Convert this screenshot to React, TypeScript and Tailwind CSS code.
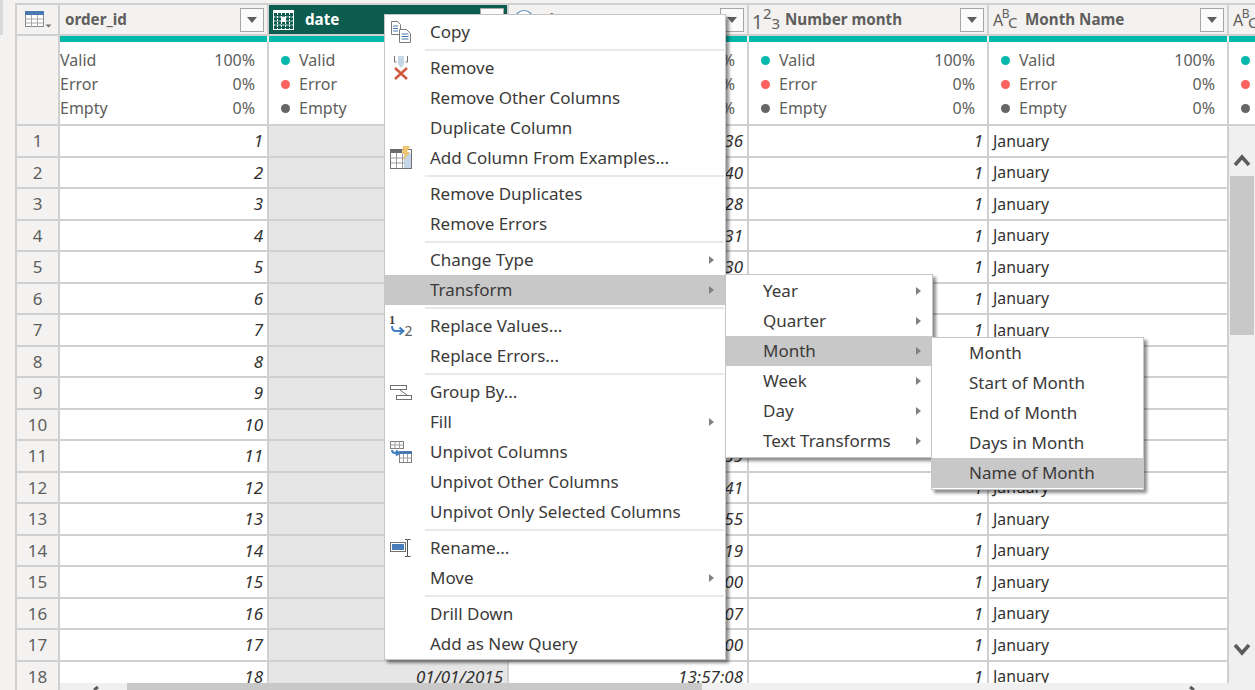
import React from "react";

const ROWS = Array.from({ length: 18 }, (_, i) => i + 1);
const TIMES = ["13:24:36","13:25:40","13:26:28","13:27:31","13:28:30","13:29:11","13:30:12","13:31:20","13:32:09","13:33:18","13:34:39","13:35:41","13:36:55","13:37:19","13:38:00","13:39:07","13:40:00","13:57:08"];

function Caret() {
  return <svg width="10" height="6" viewBox="0 0 10 6"><path d="M0 0h10L5 6z" fill="#605e5c" /></svg>;
}

function FilterBtn() {
  return (
    <div className="w-[24px] h-[24px] border border-[#a6a6a6] bg-[#fbfbfb] flex items-center justify-center shrink-0">
      <Caret />
    </div>
  );
}

function Arrow() {
  return <svg width="5" height="8" viewBox="0 0 5 8"><path d="M0 0l5 4-5 4z" fill="#808080" /></svg>;
}

function TableIcon() {
  return (
    <svg width="28" height="18" viewBox="0 0 28 18" className="shrink-0">
      <rect x="0.5" y="0.5" width="18" height="15" fill="#fff" stroke="#8a8a8a" />
      <rect x="0" y="0" width="19" height="4" fill="#4a78b0" />
      <path d="M0.5 8h18M0.5 12h18M6.5 4v12M12.5 4v12" stroke="#a8a8a8" />
      <path d="M20.5 13.5h6l-3 3z" fill="#707070" />
    </svg>
  );
}

function CalendarIcon() {
  return (
    <svg width="22" height="20" viewBox="0 0 22 20" className="shrink-0">
      <rect x="0.5" y="0.5" width="20" height="19" fill="none" stroke="#fff" />
      <rect x="0" y="0" width="21" height="3" fill="#fff" />
      <path d="M0.5 7h20M0.5 11h20M0.5 15h20M4.5 3v16M8.5 3v16M12.5 3v16M16.5 3v16" stroke="#fff" strokeDasharray="2 1" />
      <rect x="8" y="7" width="5" height="5" fill="#fff" />
    </svg>
  );
}

function ClockIcon() {
  return (
    <svg width="22" height="22" viewBox="0 0 22 22" className="shrink-0">
      <circle cx="11" cy="11" r="9.5" fill="#fff" stroke="#6d94c0" strokeWidth="1.2" />
      <path d="M11 5v6h5" fill="none" stroke="#605e5c" strokeWidth="1.2" />
    </svg>
  );
}

function NumType() {
  return (
    <span className="w-[24px] -ml-[1px] mr-[1px] shrink-0 text-[#605e5c] text-[19px] leading-none flex items-start">
      <span className="mt-[5px]">1</span>
      <span className="text-[15px] -mt-[2px]">2</span>
      <span className="text-[15px] mt-[8px]">3</span>
    </span>
  );
}

function AbcType() {
  return (
    <span className="w-[24px] shrink-0 text-[#605e5c] text-[16px] leading-none flex items-start tracking-[-1.5px]">
      <span className="mt-[3px]">A</span>
      <span className="text-[12px] -mt-[1px]">B</span>
      <span className="text-[15px] mt-[6px]">C</span>
    </span>
  );
}

function Header({ w, icon, name, selected, plain }: { w: string; icon: React.ReactNode; name: string; selected?: boolean; plain?: boolean }) {
  return (
    <div className={`${w} h-[29px] shrink-0 flex items-center pr-[3px] ${selected ? "bg-[#0c5c50]" : "bg-[#f3f2f1]"} ${plain ? "" : "pl-[4px]"}`}>
      {icon}
      <span className={`flex-1 text-[15.2px] font-bold whitespace-nowrap ${plain ? "pl-[5px]" : selected ? "pl-[10px]" : "pl-[8px]"} ${selected ? "text-white" : "text-[#605e5c]"}`}>{name}</span>
      <FilterBtn />
    </div>
  );
}

function Stats({ w, dots = true }: { w: string; dots?: boolean }) {
  const items = [
    ["Valid", "100%", "bg-[#01b8aa]"],
    ["Error", "0%", "bg-[#fd625e]"],
    ["Empty", "0%", "bg-[#666666]"],
  ];
  return (
    <div className={`${w} h-[82px] shrink-0 bg-white border-r-2 border-[#d0d0d0] pt-[6px] text-[16px] text-[#605e5c]`}>
      {items.map(([label, pct, color]) => (
        <div key={label} className="h-[24px] flex items-center pr-[12px] whitespace-nowrap">
          {dots && <span className={`w-[9px] h-[9px] rounded-full ml-[12px] mr-[9px] shrink-0 ${color}`} />}
          <span className="flex-1">{label}</span>
          <span>{pct}</span>
        </div>
      ))}
    </div>
  );
}

function BodyRow({ n }: { n: number }) {
  const cell = "h-full shrink-0 border-r-2 border-[#d0d0d0] flex items-center text-[17px] text-[#323130] whitespace-nowrap";
  return (
    <div className="h-[31.5px] flex border-b-2 border-[#d0d0d0] box-border bg-white">
      <div className={`${cell} w-[209px] justify-end pr-[4px] italic`}>{n}</div>
      <div className={`${cell} w-[240px] justify-end pr-[4px] italic bg-[#e6e6e6]`}>01/01/2015</div>
      <div className={`${cell} w-[240px] justify-end pr-[4px] italic`}>{TIMES[n - 1]}</div>
      <div className={`${cell} w-[240px] justify-end pr-[4px] italic`}>1</div>
      <div className="h-full w-[238px] shrink-0 flex items-center pl-[4px] pt-[2px] text-[15.8px] text-[#323130]">January</div>
    </div>
  );
}

function CopyIcon() {
  return (
    <svg width="20" height="22" viewBox="0 0 20 22">
      <path d="M0.5 0.5h6l3 3v10h-9z" fill="#fff" stroke="#7a7a7a" />
      <path d="M2 5h5M2 7.5h5M2 10h5" stroke="#4a78b0" />
      <path d="M8.5 8.5h7l4 4v9h-11z" fill="#fff" stroke="#7a7a7a" />
      <path d="M10.5 13h7M10.5 15.5h7M10.5 18h7" stroke="#4a78b0" />
    </svg>
  );
}

function RemoveIcon() {
  return (
    <svg width="18" height="24" viewBox="0 0 18 24">
      <path d="M2.5 0v6h2M15.5 0v6h-2" fill="none" stroke="#707070" />
      <path d="M6 0h6v8l-3 4-3-4z" fill="#c4d6e8" />
      <path d="M3 12l12 11M15 12L3 23" stroke="#d0563c" strokeWidth="2.4" />
    </svg>
  );
}

function ExamplesIcon() {
  return (
    <svg width="22" height="24" viewBox="0 0 22 24">
      <rect x="0.5" y="3.5" width="21" height="19" fill="#fff" stroke="#707070" />
      <rect x="0" y="3" width="12" height="4" fill="#6a6a6a" />
      <rect x="14" y="7" width="7" height="15" fill="#c4d6e8" />
      <path d="M0.5 12h14M0.5 17h14M6.5 7v15M12.5 7v15" stroke="#9a9a9a" />
      <path d="M13 0h7l-3 6h3l-7 9 2-7h-3z" fill="#eec56e" />
    </svg>
  );
}

function ReplaceIcon() {
  return (
    <svg width="24" height="22" viewBox="0 0 24 22">
      <text x="0" y="9" fontSize="12.5" fontWeight="700" fontFamily="Liberation Serif, serif" fill="#404040">1</text>
      <text x="15.5" y="21" fontSize="14" fontFamily="Noto Sans, sans-serif" fill="#606060">2</text>
      <path d="M3 11q0 5 4 5h7" fill="none" stroke="#3f7fc0" strokeWidth="2" />
      <path d="M10.500 12.500l4 3.500-4 3.500" fill="none" stroke="#3f7fc0" strokeWidth="2" />
    </svg>
  );
}

function GroupIcon() {
  return (
    <svg width="22" height="15" viewBox="0 0 22 15">
      <rect x="0.5" y="0.5" width="16" height="4" fill="#fff" stroke="#707070" />
      <rect x="6.5" y="10.5" width="15" height="4" fill="#fff" stroke="#707070" />
      <path d="M10 5l7 5" stroke="#707070" />
    </svg>
  );
}

function UnpivotIcon() {
  return (
    <svg width="22" height="22" viewBox="0 0 22 22">
      <rect x="0.5" y="0.5" width="13" height="7" fill="#fff" stroke="#808080" />
      <path d="M0.5 4h13M5 0.5v7M9.5 0.5v7" stroke="#a0a0a0" />
      <rect x="9.5" y="10.5" width="12" height="11" fill="#fff" stroke="#808080" />
      <rect x="9" y="10" width="13" height="3" fill="#4a78b0" />
      <path d="M9.5 17h12M13.5 13v8M17.5 13v8" stroke="#a0a0a0" />
      <path d="M2 9q0 3 3 3h4M6 9.5l3 2.5-3 2.5" fill="none" stroke="#3f7fc0" strokeWidth="2" />
    </svg>
  );
}

function RenameIcon() {
  return (
    <svg width="22" height="18" viewBox="0 0 22 18">
      <rect x="0.5" y="3.5" width="15" height="9" fill="#fff" stroke="#707070" />
      <rect x="2" y="5" width="12" height="6" fill="#4a7ebb" />
      <path d="M15 0.5h2.5M20.5 0.5H18M15 17.5h2.5M20.5 17.5H18M17.5 0.5v17" fill="none" stroke="#505050" />
    </svg>
  );
}

type Item = { label: string; icon?: React.ReactNode; sub?: boolean; active?: boolean } | "sep";

const MENU: Item[] = [
  { label: "Copy", icon: <CopyIcon /> },
  "sep",
  { label: "Remove", icon: <RemoveIcon /> },
  { label: "Remove Other Columns" },
  { label: "Duplicate Column" },
  { label: "Add Column From Examples...", icon: <ExamplesIcon /> },
  "sep",
  { label: "Remove Duplicates" },
  { label: "Remove Errors" },
  "sep",
  { label: "Change Type", sub: true },
  { label: "Transform", sub: true, active: true },
  "sep",
  { label: "Replace Values...", icon: <ReplaceIcon /> },
  { label: "Replace Errors..." },
  "sep",
  { label: "Group By...", icon: <GroupIcon /> },
  { label: "Fill", sub: true },
  { label: "Unpivot Columns", icon: <UnpivotIcon /> },
  { label: "Unpivot Other Columns" },
  { label: "Unpivot Only Selected Columns" },
  "sep",
  { label: "Rename...", icon: <RenameIcon /> },
  { label: "Move", sub: true },
  "sep",
  { label: "Drill Down" },
  { label: "Add as New Query" },
];

function MenuRows({ items, slot }: { items: Item[]; slot: string }) {
  return (
    <>
      {items.map((it, i) =>
        it === "sep" ? (
          <div key={i} className="h-[6px] pt-[2px] pl-[40px] pr-[1px]">
            <div className="h-[2px] bg-[#e8e8e8]" />
          </div>
        ) : (
          <div key={i} className={`h-[30px] flex items-center text-[17px] text-[#3b3a39] whitespace-nowrap ${it.active ? "bg-[#c8c8c8]" : ""}`}>
            <div className={`${slot} shrink-0 flex items-center justify-center pr-[13px]`}>{it.icon}</div>
            <span className="flex-1">{it.label}</span>
            {it.sub && <span className="pr-[11px] flex items-center"><Arrow /></span>}
          </div>
        )
      )}
    </>
  );
}

export default function App() {
  return (
    <div className="relative w-[1255px] h-[690px] overflow-hidden bg-[#f3f2f1] font-['Noto_Sans',sans-serif] flex">
      <div className="w-[15px] shrink-0">
        <div className="w-[3px] h-[35px] bg-[#d9d9d9]" />
      </div>
      <div className="flex-1 min-w-0 pt-[3px]">
        <div className="h-[687px] border-l-2 border-t-2 border-[#d0d0d0] flex flex-col overflow-hidden">
          {/* header */}
          <div className="flex h-[31px] border-b-2 border-[#d0d0d0] shrink-0">
            <div className="w-[43px] shrink-0 border-r-2 border-[#d0d0d0] flex items-center pl-[8px]"><TableIcon /></div>
            <div className="w-[209px] shrink-0 border-r-2 border-[#d0d0d0]"><Header w="w-full" plain icon={null} name="order_id" /></div>
            <div className="w-[240px] shrink-0 border-r-2 border-[#d0d0d0]"><Header w="w-full" selected icon={<CalendarIcon />} name="date" /></div>
            <div className="w-[240px] shrink-0 border-r-2 border-[#d0d0d0]"><Header w="w-full" icon={<ClockIcon />} name="time" /></div>
            <div className="w-[240px] shrink-0 border-r-2 border-[#d0d0d0]"><Header w="w-full" icon={<NumType />} name="Number month" /></div>
            <div className="w-[240px] shrink-0 border-r-2 border-[#d0d0d0]"><Header w="w-full" icon={<AbcType />} name="Month Name" /></div>
            <div className="flex-1 min-w-0 overflow-hidden pl-[4px] flex items-center"><AbcType /></div>
          </div>
          {/* quality bars */}
          <div className="flex h-[6px] shrink-0">
            <div className="w-[43px] shrink-0 border-r-2 border-[#d0d0d0]" />
            <div className="w-[207px] shrink-0 bg-[#01b8aa] mr-[2px]" />
            <div className="w-[238px] shrink-0 bg-[#01b8aa] mr-[2px]" />
            <div className="w-[238px] shrink-0 bg-[#01b8aa] mr-[2px]" />
            <div className="w-[238px] shrink-0 bg-[#01b8aa] mr-[2px]" />
            <div className="w-[238px] shrink-0 bg-[#01b8aa] mr-[2px]" />
            <div className="flex-1 bg-[#01b8aa]" />
          </div>
          {/* stats */}
          <div className="flex h-[84px] border-b-2 border-[#d0d0d0] shrink-0 overflow-hidden">
            <div className="w-[43px] shrink-0 border-r-2 border-[#d0d0d0]" />
            <Stats w="w-[209px]" dots={false} />
            <Stats w="w-[240px]" />
            <Stats w="w-[240px]" />
            <Stats w="w-[240px]" />
            <Stats w="w-[240px]" />
            <div className="flex-1 min-w-0 overflow-hidden bg-white"><Stats w="w-[240px]" /></div>
          </div>
          {/* body */}
          <div className="flex flex-1 min-h-0">
            <div className="w-[43px] shrink-0 border-r-2 border-[#d0d0d0] overflow-hidden">
              {ROWS.map((n) => (
                <div key={n} className="h-[31.5px] border-b-2 border-[#d0d0d0] box-border flex items-center justify-center text-[17px] text-[#605e5c]">{n}</div>
              ))}
            </div>
            <div className="flex-1 min-w-0 flex flex-col">
              <div className="flex-1 min-h-0 flex">
                <div className="w-[1169px] shrink-0 overflow-hidden border-r-2 border-[#d0d0d0]">
                  {ROWS.map((n) => <BodyRow key={n} n={n} />)}
                </div>
                <div className="flex-1 bg-[#f0f0f0] flex flex-col items-center pl-[1px] pr-[1px]">
                  <svg width="18" height="14" viewBox="0 0 18 14" className="mt-[27px] mb-[9px] shrink-0"><path d="M2 12L9 4l7 8" fill="none" stroke="#5c5c5c" strokeWidth="3.5" /></svg>
                  <div className="w-full h-[159px] bg-[#c8c8c8] shrink-0" />
                  <svg width="18" height="14" viewBox="0 0 18 14" className="mt-[308px] shrink-0"><path d="M2 2l7 8 7-8" fill="none" stroke="#5c5c5c" strokeWidth="3.5" /></svg>
                </div>
              </div>
              <div className="h-[7px] shrink-0 bg-[#f0f0f0] flex items-start">
                <svg width="8" height="7" viewBox="0 0 8 7" className="ml-[31px] shrink-0"><path d="M7 4L3 7" stroke="#5c5c5c" strokeWidth="3" /></svg>
                <div className="ml-[28px] w-[575px] h-[7px] bg-[#c8c8c8] shrink-0" />
                <svg width="8" height="7" viewBox="0 0 8 7" className="ml-[487px] shrink-0"><path d="M1 4l4 3" stroke="#5c5c5c" strokeWidth="3" /></svg>
              </div>
            </div>
          </div>
        </div>
      </div>

      {/* context menu */}
      <div className="absolute left-[384px] top-[14px] w-[342px] h-[646px] bg-white border border-[#c6c6c6] pt-[2px] shadow-[3px_3px_3px_rgba(0,0,0,0.45)]">
        <MenuRows items={MENU} slot="w-[45px]" />
      </div>
      {/* Transform submenu */}
      <div className="absolute left-[725px] top-[274px] w-[208px] h-[184px] bg-white border border-[#c6c6c6] pt-[1px] shadow-[3px_3px_3px_rgba(0,0,0,0.45)]">
        <MenuRows
          slot="w-[37px]"
          items={[
            { label: "Year", sub: true },
            { label: "Quarter", sub: true },
            { label: "Month", sub: true, active: true },
            { label: "Week", sub: true },
            { label: "Day", sub: true },
            { label: "Text Transforms", sub: true },
          ]}
        />
      </div>
      {/* Month submenu */}
      <div className="absolute left-[931px] top-[337px] w-[213px] h-[153px] bg-white border border-[#c6c6c6] shadow-[3px_3px_3px_rgba(0,0,0,0.45)]">
        <MenuRows
          slot="w-[37px]"
          items={[
            { label: "Month" },
            { label: "Start of Month" },
            { label: "End of Month" },
            { label: "Days in Month" },
            { label: "Name of Month", active: true },
          ]}
        />
      </div>
    </div>
  );
}
